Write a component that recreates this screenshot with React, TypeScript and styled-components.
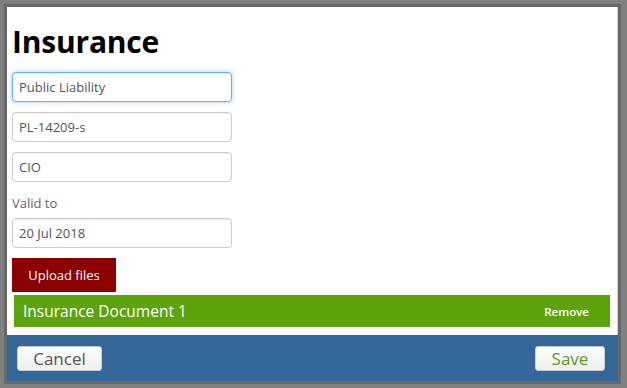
import React from "react";
import styled, { createGlobalStyle } from "styled-components";

const GlobalStyle = createGlobalStyle`
  html, body {
    margin: 0;
    padding: 0;
    background: #808080;
    font-family: "Open Sans", "Liberation Sans", sans-serif;
  }
`;

const Backdrop = styled.div`
  width: 627px;
  height: 388px;
  padding: 4px 0 0 4px;
  box-sizing: border-box;
  background: #808080;
`;

const Modal = styled.div`
  width: 617px;
  height: 380px;
  box-sizing: border-box;
  border: 3px solid #686868;
  background: #fff;
  display: flex;
  flex-direction: column;
  box-shadow: inset -1px -1px 0 #cfcfcf;
`;

const Body = styled.div`
  flex: 1;
  padding: 0 8px 0 5px;
  display: flex;
  flex-direction: column;
  align-items: flex-start;
`;

const Title = styled.h1`
  margin: 17px 0 12px;
  font-size: 30px;
  line-height: 36px;
  font-weight: 700;
  letter-spacing: -0.2px;
  color: #000;
`;

const Input = styled.input<{ $focused?: boolean }>`
  width: 220px;
  height: 30px;
  box-sizing: border-box;
  margin-bottom: 10px;
  padding: 0 6px;
  border: 1px solid ${(p) => (p.$focused ? "#66afe9" : "#ccc")};
  border-radius: 4px;
  font-family: inherit;
  font-size: 13px;
  color: #555;
  box-shadow: ${(p) =>
    p.$focused
      ? "inset 0 1px 1px rgba(0,0,0,.075), 0 0 5px rgba(102,175,233,.6)"
      : "inset 0 1px 1px rgba(0,0,0,.075)"};
  outline: none;
`;

const Label = styled.label`
  font-size: 13px;
  color: #666;
  margin: 2px 0 6px;
`;

const UploadButton = styled.button`
  height: 34px;
  width: 104px;
  margin-top: 0;
  border: none;
  background: #8b0000;
  color: #fff;
  font-family: inherit;
  font-size: 13px;
  padding: 0;
`;

const FileBar = styled.div`
  align-self: stretch;
  margin: 3px 0 0 2px;
  height: 32px;
  background: #5da30c;
  color: #fff;
  display: flex;
  align-items: center;
  justify-content: space-between;
  padding: 0 21px 0 9px;
`;

const FileName = styled.span`
  font-size: 15.5px;
`;

const RemoveLink = styled.span`
  font-size: 11.5px;
  font-weight: 600;
`;

const Footer = styled.div`
  height: 46px;
  background: #336699;
  display: flex;
  align-items: center;
  justify-content: space-between;
  padding: 0 13px 0 10px;
`;

const FooterButton = styled.button<{ $tone: string; $width: number }>`
  height: 25px;
  width: ${(p) => p.$width}px;
  padding: 0;
  border: 1px solid #ccc;
  border-radius: 3px;
  background: linear-gradient(#fff, #eee);
  color: ${(p) => p.$tone};
  font-family: inherit;
  font-size: 17px;
  line-height: 23px;
`;

export default function App() {
  return (
    <Backdrop>
      <GlobalStyle />
      <Modal>
        <Body>
          <Title>Insurance</Title>
          <Input $focused defaultValue="Public Liability" />
          <Input defaultValue="PL-14209-s" />
          <Input defaultValue="CIO" />
          <Label>Valid to</Label>
          <Input defaultValue="20 Jul 2018" />
          <UploadButton>Upload files</UploadButton>
          <FileBar>
            <FileName>Insurance Document 1</FileName>
            <RemoveLink>Remove</RemoveLink>
          </FileBar>
        </Body>
        <Footer>
          <FooterButton $tone="#555" $width={85}>
            Cancel
          </FooterButton>
          <FooterButton $tone="#5a9a1e" $width={70}>
            Save
          </FooterButton>
        </Footer>
      </Modal>
    </Backdrop>
  );
}
